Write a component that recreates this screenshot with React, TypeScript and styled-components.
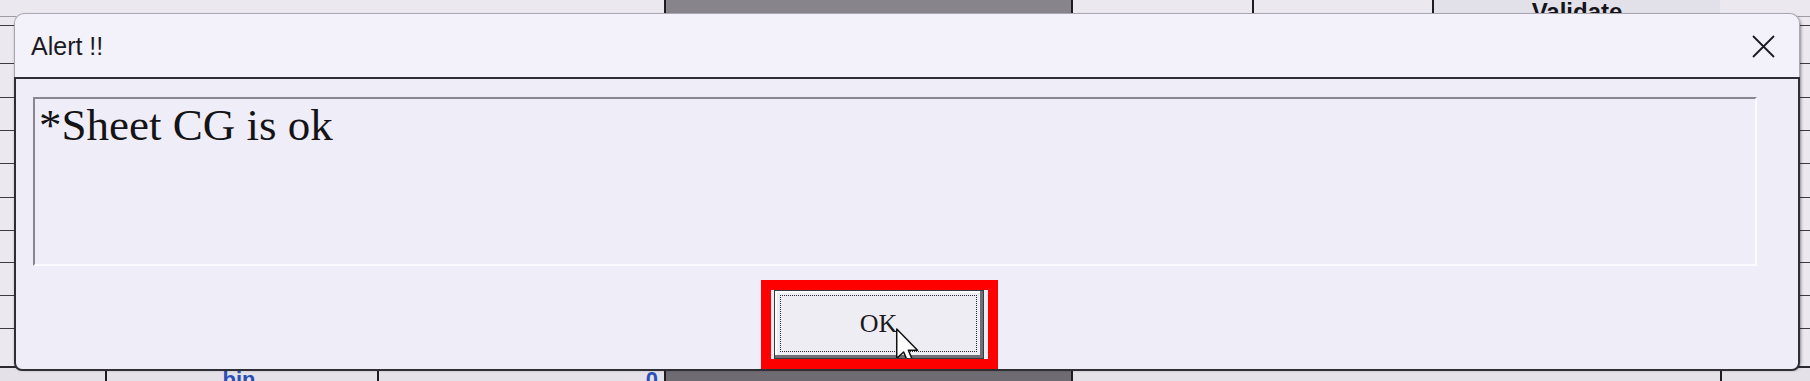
import React from 'react';
import styled, { createGlobalStyle } from 'styled-components';

const GlobalStyle = createGlobalStyle`
  html, body {
    margin: 0;
    padding: 0;
  }
  body {
    width: 1810px;
    height: 381px;
    overflow: hidden;
    background: #ebe8f0;
    font-family: 'Liberation Sans', Arial, sans-serif;
  }
`;

const Screen = styled.div`
  position: relative;
  width: 1810px;
  height: 381px;
  overflow: hidden;
  display: flex;
  flex-direction: column;
`;

/* ---------- spreadsheet behind the alert ---------- */

const TopRow = styled.div`
  display: flex;
  height: 16px;
  flex-shrink: 0;
  border-bottom: 1px solid #9f9ca6;
`;

const MidRow = styled.div<{ $h: number; $last?: boolean }>`
  height: ${(p) => p.$h}px;
  flex-shrink: 0;
  border-bottom: ${(p) => (p.$last ? 'none' : '1px solid #3c3b40')};
  box-sizing: border-box;
`;

const BottomRow = styled.div`
  display: flex;
  flex: 1;
  border-top: 2px solid #2a292e;
  background: #e4e1e9;
`;

const Cell = styled.div<{ $w: number; $bg?: string; $edge?: boolean; $align?: string; $valign?: string }>`
  width: ${(p) => p.$w}px;
  flex-shrink: 0;
  box-sizing: border-box;
  background: ${(p) => p.$bg || 'transparent'};
  border-left: ${(p) => (p.$edge ? '2px solid #1d1c20' : 'none')};
  display: flex;
  justify-content: ${(p) => p.$align || 'center'};
  align-items: ${(p) => p.$valign || 'flex-start'};
  overflow: hidden;
`;

const HeaderText = styled.span`
  font-family: 'Liberation Sans', Arial, sans-serif;
  font-weight: 700;
  font-size: 24px;
  line-height: 24px;
  color: #151418;
  margin-bottom: -8px;
`;

const LinkText = styled.span`
  font-family: 'Liberation Sans', Arial, sans-serif;
  font-weight: 700;
  font-size: 22px;
  line-height: 22px;
  color: #2c4fb5;
  margin-top: 1px;
  padding-right: 6px;
`;

/* ---------- alert dialog ---------- */

const Dialog = styled.div`
  position: absolute;
  left: 14px;
  top: 13px;
  width: 1786px;
  height: 355px;
  display: flex;
  flex-direction: column;
  background: #f1f0f9;
  border-radius: 10px 10px 8px 8px;
  box-shadow: 1px 2px 3px rgba(20, 18, 26, 0.45);
`;

const TitleBar = styled.div`
  height: 64px;
  flex-shrink: 0;
  box-sizing: border-box;
  display: flex;
  align-items: center;
  justify-content: space-between;
  padding: 0 24px 0 16px;
  background: #f3f2fb;
  border: 1px solid #a9a7b0;
  border-bottom: none;
  border-radius: 10px 10px 0 0;
`;

const Title = styled.span`
  font-family: 'Liberation Sans', Arial, sans-serif;
  font-size: 25px;
  color: #1b1a1f;
  margin-top: 2px;
`;

const CloseButton = styled.button`
  width: 24px;
  height: 24px;
  padding: 0;
  border: none;
  background: transparent;
  display: flex;
  align-items: center;
  justify-content: center;
  margin-top: 2px;
`;

const Body = styled.div`
  flex: 1;
  display: flex;
  flex-direction: column;
  box-sizing: border-box;
  padding: 18px 0 0 17px;
  border: 2px solid #2f2e35;
  border-radius: 0 0 8px 8px;
  background: #efedf7;
`;

const MessageBox = styled.div`
  width: 1724px;
  height: 169px;
  box-sizing: border-box;
  padding: 3px 4px;
  background: #efedf7;
  border-top: 2px solid #88868e;
  border-left: 2px solid #88868e;
  border-right: 2px solid #fbfbff;
  border-bottom: 2px solid #fbfbff;
  font-family: 'Liberation Serif', 'Times New Roman', serif;
  font-size: 45px;
  line-height: 46px;
  color: #141316;
`;

const ButtonRow = styled.div`
  display: flex;
  padding-left: 728px;
  margin-top: 14px;
`;

const Highlight = styled.div`
  display: inline-flex;
  border: 10px solid #ff0000;
  padding: 0 4px 0 3px;
  background: #efedf4;
`;

const OkButton = styled.button`
  position: relative;
  width: 210px;
  height: 69px;
  box-sizing: border-box;
  padding: 4px 6px 6px 5px;
  display: flex;
  overflow: hidden;
  background: #efedf4;
  border: 1px solid #3b3a40;
  box-shadow: inset -3px -3px 0 #6f6d75, inset 2px 2px 0 #ffffff;
  cursor: default;
`;

const FocusRing = styled.span`
  flex: 1;
  display: flex;
  align-items: center;
  justify-content: center;
  border: 1px dotted #2a292e;
  font-family: 'Liberation Serif', 'Times New Roman', serif;
  font-size: 26px;
  color: #1a1a1d;
`;

const Pointer = styled.svg`
  position: absolute;
  left: 120px;
  top: 36px;
  width: 30px;
  height: 42px;
`;

const midRows = [9, 38, 34, 33, 33, 34, 33, 32, 33, 33];

const App: React.FC = () => {
  return (
    <>
      <GlobalStyle />
      <Screen>
        <TopRow>
          <Cell $w={664} />
          <Cell $w={407} $bg="#88848b" $edge />
          <Cell $w={181} $edge />
          <Cell $w={180} $edge />
          <Cell $w={288} $bg="#e2e0e8" $edge $valign="flex-end">
            <HeaderText>Validate</HeaderText>
          </Cell>
          <Cell $w={90} />
        </TopRow>
        {midRows.map((h, i) => (
          <MidRow key={i} $h={h} />
        ))}
        <MidRow $h={37} $last />
        <BottomRow>
          <Cell $w={105} />
          <Cell $w={272} $edge>
            <LinkText>bin</LinkText>
          </Cell>
          <Cell $w={287} $edge $align="flex-end">
            <LinkText>0</LinkText>
          </Cell>
          <Cell $w={407} $bg="#6e6b72" $edge />
          <Cell $w={649} $edge />
          <Cell $w={90} $edge />
        </BottomRow>

        <Dialog>
          <TitleBar>
            <Title>Alert !!</Title>
            <CloseButton aria-label="Close">
              <svg width="23" height="23" viewBox="0 0 23 23">
                <path d="M1 1 L22 22 M22 1 L1 22" stroke="#1b1a1f" strokeWidth="1.8" fill="none" />
              </svg>
            </CloseButton>
          </TitleBar>
          <Body>
            <MessageBox>*Sheet CG is ok</MessageBox>
            <ButtonRow>
              <Highlight>
                <OkButton>
                  <FocusRing>OK</FocusRing>
                  <Pointer viewBox="0 0 26 36">
                    <path
                      d="M1.5 1.5 L1.5 27 L7.5 21.5 L11.5 31 L15.5 29.3 L11.6 20 L19.5 20 Z"
                      fill="#ffffff"
                      stroke="#111111"
                      strokeWidth="1.3"
                      strokeLinejoin="round"
                    />
                  </Pointer>
                </OkButton>
              </Highlight>
            </ButtonRow>
          </Body>
        </Dialog>
      </Screen>
    </>
  );
};

export default App;
